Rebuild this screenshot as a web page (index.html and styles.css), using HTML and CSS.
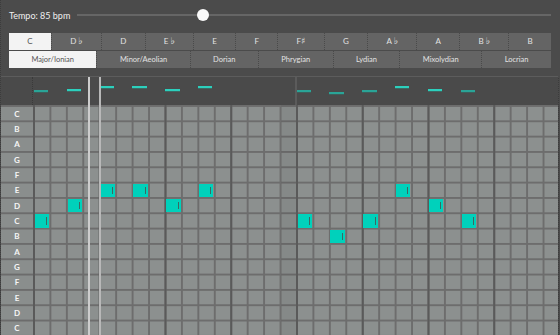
FILE: index.html
```html
<!DOCTYPE html>
<html>
<head>
<meta charset="utf-8">
<link rel="stylesheet" href="styles.css">
</head>
<body>
<div class="app">
  <div class="tempo">
    <span class="tempo-label">Tempo: 85 bpm</span>
    <div class="track"><div class="thumb" style="left:26.6%"></div></div>
  </div>
  <div class="keys">
    <button class="btn sel">C</button>
    <button class="btn">D <span class="acc">♭</span></button>
    <button class="btn">D</button>
    <button class="btn">E <span class="acc">♭</span></button>
    <button class="btn">E</button>
    <button class="btn">F</button>
    <button class="btn">F<span class="acc">♯</span></button>
    <button class="btn">G</button>
    <button class="btn">A <span class="acc">♭</span></button>
    <button class="btn">A</button>
    <button class="btn">B <span class="acc">♭</span></button>
    <button class="btn">B</button>
  </div>
  <div class="modes">
    <button class="btn sel">Major/Ionian</button>
    <button class="btn">Minor/Aeolian</button>
    <button class="btn">Dorian</button>
    <button class="btn">Phrygian</button>
    <button class="btn">Lydian</button>
    <button class="btn">Mixolydian</button>
    <button class="btn">Locrian</button>
  </div>
  <div class="editor">
    <div class="preview">
      <div class="corner"></div>
      <div class="preview-grid">
        <div class="pn dim" style="grid-column:1;margin-top:13px"></div>
        <div class="pn" style="grid-column:3;margin-top:11.5px"></div>
        <div class="pn" style="grid-column:5;margin-top:9px"></div>
        <div class="pn" style="grid-column:7;margin-top:9px"></div>
        <div class="pn" style="grid-column:9;margin-top:11.5px"></div>
        <div class="pn" style="grid-column:11;margin-top:9px"></div>
        <div class="pn dim" style="grid-column:17;margin-top:13px"></div>
        <div class="pn dim" style="grid-column:19;margin-top:14.5px"></div>
        <div class="pn dim" style="grid-column:21;margin-top:13px"></div>
        <div class="pn" style="grid-column:23;margin-top:9px"></div>
        <div class="pn" style="grid-column:25;margin-top:11.5px"></div>
        <div class="pn dim" style="grid-column:27;margin-top:13px"></div>
      </div>
    </div>
    <div class="roll-wrap">
      <div class="labels">
        <span>C</span><span>B</span><span>A</span><span>G</span><span>F</span>
        <span>E</span><span>D</span><span>C</span><span>B</span><span>A</span>
        <span>G</span><span>F</span><span>E</span><span>D</span><span>C</span>
      </div>
      <div class="roll">
        <div class="shade"></div>
        <div class="note" style="grid-column:1;grid-row:8"></div>
        <div class="note" style="grid-column:3;grid-row:7"></div>
        <div class="note" style="grid-column:5;grid-row:6"></div>
        <div class="note" style="grid-column:7;grid-row:6"></div>
        <div class="note" style="grid-column:9;grid-row:7"></div>
        <div class="note" style="grid-column:11;grid-row:6"></div>
        <div class="note" style="grid-column:17;grid-row:8"></div>
        <div class="note" style="grid-column:19;grid-row:9"></div>
        <div class="note" style="grid-column:21;grid-row:8"></div>
        <div class="note" style="grid-column:23;grid-row:6"></div>
        <div class="note" style="grid-column:25;grid-row:7"></div>
        <div class="note" style="grid-column:27;grid-row:8"></div>
      </div>
    </div>
    <div class="playhead ph-a"></div>
    <div class="playhead ph-b"></div>
  </div>
</div>
</body>
</html>
```

FILE: styles.css
```css
* { box-sizing: border-box; }
html, body {
  margin: 0;
  padding: 0;
  background: #4b4b4b;
  overflow: hidden;
}
body {
  font-family: "Lato", "Open Sans", sans-serif;
  color: #e6e6e6;
}
.app {
  width: 560px;
  height: 335px;
  border-left: 1px dotted #3c3c3c;
  overflow: hidden;
}
.tempo {
  height: 30px;
  display: flex;
  align-items: center;
  padding: 0 9px 0 8px;
}
.tempo-label {
  font-size: 9px;
  color: #f0f0f0;
  width: 68px;
}
.track {
  flex: 1;
  height: 2px;
  background: #666;
  position: relative;
}
.thumb {
  position: absolute;
  top: -5px;
  width: 12px;
  height: 12px;
  margin-left: -6px;
  border-radius: 50%;
  background: #fafafa;
}
.keys, .modes {
  display: flex;
  margin: 0 9px 0 8px;
  height: 17px;
}
.keys { margin-top: 3px; }
.modes { margin-top: 1px; }
.btn {
  flex: 1 1 auto;
  padding: 0;
  margin: 0;
  border: none;
  border-left: 1px dotted #4a4a4a;
  background: #646464;
  color: #e2e2e2;
  font-family: "Lato", "Open Sans", sans-serif;
  font-size: 7.5px;
  line-height: 17px;
  height: 17px;
}
.keys .btn { font-size: 8px; }
.acc {
  font-family: "DejaVu Sans", sans-serif;
  font-size: 9px;
}
.btn:first-child { border-left: none; }
.btn.sel {
  background: #f3f3f3;
  color: #555;
}
.editor {
  position: relative;
  margin-top: 8px;
  border-top: 1px solid #5c5c5c;
  width: 558px;
  border-right: 1px dotted #3c3c3c;
}
.preview {
  display: flex;
  height: 28px;
  background: #4a4a4a;
}
.corner {
  width: 32px;
  border-right: 1px dotted #3a3a3a;
}
.preview-grid {
  flex: 1;
  display: grid;
  grid-template-columns: repeat(32, 1fr);
  grid-template-rows: 1fr;
  background: linear-gradient(#5b5b5b, #5b5b5b) no-repeat 262px 0 / 2px 100%;
}
.pn {
  grid-row: 1;
  align-self: start;
  height: 2px;
  margin-left: 1px;
  margin-right: 1px;
  background: #2cd0bd;
  box-shadow: 0 1px 0 #3b6a64;
}
.pn.dim {
  background: #2aa497;
  box-shadow: 0 1px 0 #3c5f5b;
}
.roll-wrap {
  display: flex;
  height: 230px;
}
.labels {
  width: 32px;
  display: grid;
  grid-template-rows: repeat(15, 1fr);
  background-color: #8a8e8d;
  background-image: linear-gradient(to bottom, #6c6c6c 0 2px, transparent 2px);
  background-size: 100% 15.333px;
}
.labels span {
  display: flex;
  align-items: center;
  justify-content: center;
  padding-top: 2px;
  font-size: 8px;
  font-weight: 700;
  color: #f6f6f6;
}
.roll {
  flex: 1;
  display: grid;
  grid-template-columns: repeat(32, 1fr);
  grid-template-rows: repeat(15, 1fr);
  background-color: #8c908f;
  background-image:
    linear-gradient(to right, #5a5a5a 0 2px, transparent 2px),
    linear-gradient(to right, #6d6d6d 0 2px, transparent 2px),
    linear-gradient(to bottom, #6d6d6d 0 2px, transparent 2px);
  background-size: 65.75px 100%, 16.4375px 100%, 100% 15.333px;
}
.shade {
  grid-column: 16;
  grid-row: 1 / -1;
  margin-left: 2px;
  background: rgba(0, 0, 0, 0.045);
}
.note {
  margin: 2px 0 0 2px;
  background: #00d1bb;
  position: relative;
}
.note::after {
  content: "";
  position: absolute;
  right: 2px;
  top: 3px;
  bottom: 3px;
  width: 1px;
  background: #3d6762;
}
.playhead {
  position: absolute;
  top: 0;
  bottom: 0;
}
.ph-a {
  left: 87px;
  width: 2px;
  background: #cdcdcd;
}
.ph-b {
  left: 98px;
  width: 2px;
  background: #b8b8b8;
}
```
